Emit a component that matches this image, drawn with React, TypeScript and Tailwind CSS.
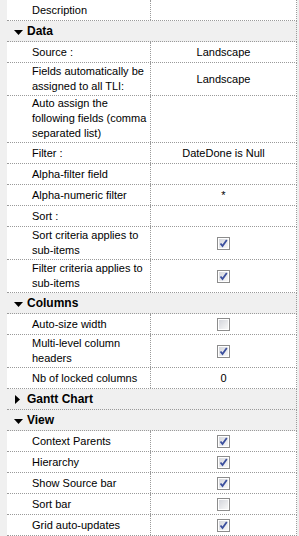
import React from 'react';

type Item =
    | { kind: 'section'; title: string; open: boolean }
    | { kind: 'row'; label: string; value?: string; check?: boolean; tight?: boolean };

const items: Item[] = [
    { kind: 'row', label: 'Description' },
    { kind: 'section', title: 'Data', open: true },
    { kind: 'row', label: 'Source :', value: 'Landscape' },
    { kind: 'row', label: 'Fields automatically be assigned to all TLI:', value: 'Landscape' },
    { kind: 'row', label: 'Auto assign the following fields (comma separated list)', tight: true },
    { kind: 'row', label: 'Filter :', value: 'DateDone is Null' },
    { kind: 'row', label: 'Alpha-filter field' },
    { kind: 'row', label: 'Alpha-numeric filter', value: '*' },
    { kind: 'row', label: 'Sort :' },
    { kind: 'row', label: 'Sort criteria applies to sub-items', check: true },
    { kind: 'row', label: 'Filter criteria applies to sub-items', check: true },
    { kind: 'section', title: 'Columns', open: true },
    { kind: 'row', label: 'Auto-size width', check: false },
    { kind: 'row', label: 'Multi-level column headers', check: true },
    { kind: 'row', label: 'Nb of locked columns', value: '0' },
    { kind: 'section', title: 'Gantt Chart', open: false },
    { kind: 'section', title: 'View', open: true },
    { kind: 'row', label: 'Context Parents', check: true },
    { kind: 'row', label: 'Hierarchy', check: true },
    { kind: 'row', label: 'Show Source bar', check: true },
    { kind: 'row', label: 'Sort bar', check: false },
    { kind: 'row', label: 'Grid auto-updates', check: true },
];

function CheckBox({ checked }: { checked: boolean }) {
    return (
        <svg width="13" height="13" viewBox="0 0 13 13">
            <defs>
                <linearGradient id="cbfill" x1="0" y1="0" x2="1" y2="1">
                    <stop offset="0" stopColor="#d4d6dc" />
                    <stop offset="1" stopColor="#f8f8f8" />
                </linearGradient>
            </defs>
            <rect x="0.5" y="0.5" width="12" height="12" fill="#fff" stroke="#8c8c8c" />
            <rect x="2" y="2" width="9" height="9" fill="url(#cbfill)" />
            {checked && (
                <path d="M3.5 6.5 L5.5 9 L9.8 3" fill="none" stroke="#3b4f9e" strokeWidth="1.8" />
            )}
        </svg>
    );
}

function Triangle({ open }: { open: boolean }) {
    return open ? (
        <svg width="9" height="5" viewBox="0 0 9 5" className="ml-[7px] mr-[4px] mt-[2px]">
            <path d="M0 0 H9 L4.5 5 Z" fill="#000" />
        </svg>
    ) : (
        <svg width="5" height="9" viewBox="0 0 5 9" className="ml-[8px] mr-[7px]">
            <path d="M0 0 L5 4.5 L0 9 Z" fill="#000" />
        </svg>
    );
}

export default function App() {
    return (
        <div
            className="w-[299px] h-[536px] overflow-hidden bg-white text-[11px] text-black"
            style={{ fontFamily: '"Liberation Sans", Arial, sans-serif' }}
        >
            {items.map((it, i) => (
                <div key={i} className="flex">
                    <div className="w-[7px] shrink-0 bg-[#f0f0f0]" />
                    {it.kind === 'section' ? (
                        <div className="w-[290px] shrink-0 h-[21px] flex items-center bg-[#f0f0f0] border-b border-r border-dotted border-[#9a9a9a] font-bold text-[12px]">
                            <Triangle open={it.open} />
                            <span>{it.title}</span>
                        </div>
                    ) : (
                        <div className="w-[290px] shrink-0 flex border-b border-r border-dotted border-[#9a9a9a]">
                            <div
                                className={
                                    it.tight
                                        ? 'w-[143px] shrink-0 min-h-[20px] pl-[25px] pt-0 pb-[1px] leading-[15px] flex items-center'
                                        : 'w-[143px] shrink-0 min-h-[20px] pl-[25px] py-[1px] leading-[15px] flex items-center'
                                }
                            >
                                {it.label}
                            </div>
                            <div className="flex-1 flex items-center justify-center border-l border-dotted border-[#9a9a9a]">
                                {it.check !== undefined ? <CheckBox checked={it.check} /> : it.value}
                            </div>
                        </div>
                    )}
                    <div className="w-[2px] shrink-0 bg-[#f0f0f0]" />
                </div>
            ))}
        </div>
    );
}
